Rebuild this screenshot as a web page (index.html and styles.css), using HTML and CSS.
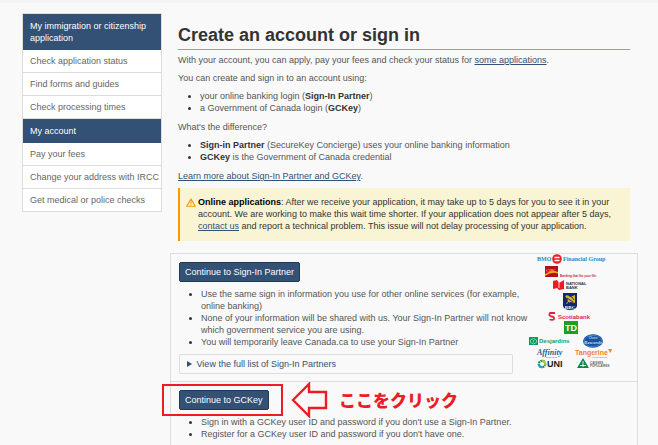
FILE: index.html
```html
<!DOCTYPE html>
<html lang="en">
<head>
  <meta charset="UTF-8" />
  <meta name="viewport" content="width=device-width, initial-scale=1" />
  <title>Create an account or sign in - Canada.ca</title>
  <link rel="stylesheet" href="styles.css">
</head>
<body>

<div class="page">

  <nav class="side-menu" aria-label="Section menu">
    <h2 class="menu-title">My immigration or citizenship application</h2>
    <a href="#">Check application status</a>
    <a href="#">Find forms and guides</a>
    <a href="#">Check processing times</a>
    <h2 class="menu-title">My account</h2>
    <a href="#">Pay your fees</a>
    <a href="#">Change your address with IRCC</a>
    <a href="#">Get medical or police checks</a>
  </nav>

  <main>
    <h1>Create an account or sign in</h1>
    <p>With your account, you can apply, pay your fees and check your status for <a href="#">some applications</a>.</p>
    <p>You can create and sign in to an account using:</p>
    <ul>
      <li>your online banking login (<strong>Sign-In Partner</strong>)</li>
      <li>a Government of Canada login (<strong>GCKey</strong>)</li>
    </ul>
    <p>What's the difference?</p>
    <ul>
      <li><strong>Sign-in Partner</strong> (SecureKey Concierge) uses your online banking information</li>
      <li><strong>GCKey</strong> is the Government of Canada credential</li>
    </ul>
    <p><a href="#">Learn more about Sign-In Partner and GCKey</a>.</p>

    <section class="alert">
      <svg class="alert-icon" viewBox="0 0 20 18" aria-hidden="true">
        <path d="M10 2 L18.5 16.5 H1.5 Z" fill="none" stroke="#ff9900" stroke-width="2.4" stroke-linejoin="round"/>
        <path d="M10 6.5 V11.5 M10 12.8 V15" stroke="#ff9900" stroke-width="2.2"/>
      </svg>
      <p><strong>Online applications</strong>: After we receive your application, it may take up to 5 days for you to see it in your account. We are working to make this wait time shorter. If your application does not appear after 5 days, <a href="#">contact us</a> and report a technical problem. This issue will not delay processing of your application.</p>
    </section>

    <div class="options">
      <section class="option partner">
        <div class="partner-info">
          <button type="button" class="btn">Continue to Sign-In Partner</button>
          <ul>
            <li>Use the same sign in information you use for other online services (for example, online banking)</li>
            <li>None of your information will be shared with us. Your Sign-In Partner will not know which government service you are using.</li>
            <li>You will temporarily leave Canada.ca to use your Sign-In Partner</li>
          </ul>
          <details>
            <summary>View the full list of Sign-In Partners</summary>
          </details>
        </div>

        <svg class="logos" viewBox="0 0 90 120" role="img" aria-label="Sign-In Partners">
          <!-- BMO -->
          <g font-family="Liberation Serif, serif" font-weight="700" font-size="6" fill="#1b87c9">
            <text x="9" y="7">BMO</text>
            <circle cx="29" cy="5" r="4.8" fill="#ed1c24"/>
            <path d="M26.5 3.5 H31.5 M26.5 6.5 H31.5" stroke="#fff" stroke-width="1.4"/>
            <text x="35" y="7">Financial Group</text>
          </g>
          <!-- CIBC -->
          <rect x="17" y="12" width="13" height="11" fill="#b30f24"/>
          <path d="M17 20 Q24 15 30 18 V19.5 Q24 17 17 22 Z" fill="#f5a81c"/>
          <text x="18" y="17.5" font-family="Liberation Serif, serif" font-weight="700" font-size="4" fill="#f9b233">CIBC</text>
          <text x="32" y="22.5" font-family="Liberation Sans, sans-serif" font-weight="700" font-size="3" fill="#c4213c">Banking that fits your life.</text>
          <!-- National Bank -->
          <path d="M25 27 L29 26 L31 29 L36 26 V35 L31 36 L29 34 L25 35 Z" fill="#ed1c24"/>
          <path d="M31 29 V34" stroke="#f8f8f8" stroke-width="0.8"/>
          <g font-family="Liberation Sans, sans-serif" font-weight="700" font-size="4" fill="#243746">
            <text x="38" y="30.5">NATIONAL</text>
            <text x="38" y="35">BANK</text>
          </g>
          <!-- RBC -->
          <path d="M35 39 H49 V52 Q48 56 42 56 Q36 56 35 52 Z" fill="#14246e"/>
          <path d="M37 42 Q40 40 42 43 L47 41 V49 L43 48 L38 50 L40 46 Z" fill="#d6b526"/>
          <path d="M39 44 L45 48 M43 42 L46 46 M38 47 L43 50" stroke="#14246e" stroke-width="0.9"/>
          <text x="42" y="55" text-anchor="middle" font-family="Liberation Serif, serif" font-weight="700" font-size="5" fill="#fff">RBC</text>
          <!-- Scotiabank -->
          <path d="M27 59 H22 Q20 62 24 62.5 Q26.5 63 26 65 Q25 66.5 21.5 65.5" fill="none" stroke="#ed1c3c" stroke-width="1.8"/>
          <text x="30" y="65" font-family="Liberation Sans, sans-serif" font-weight="700" font-size="6" fill="#ed1c3c">Scotiabank</text>
          <!-- TD -->
          <rect x="36" y="67" width="14" height="13" fill="#1ea01e"/>
          <text x="43" y="77" text-anchor="middle" font-family="Liberation Sans, sans-serif" font-weight="700" font-size="9" fill="#fff">TD</text>
          <!-- Desjardins -->
          <rect x="1" y="83" width="9" height="8" fill="#0d9b5c"/>
          <path d="M5.5 84.5 L8.5 86 V88.5 L5.5 90 L2.5 88.5 V86 Z M5.5 86 V88.5" fill="none" stroke="#9ad8bb" stroke-width="0.8"/>
          <text x="11" y="89" font-family="Liberation Sans, sans-serif" font-weight="700" font-size="6" fill="#179b62">Desjardins</text>
          <!-- Choice Rewards -->
          <ellipse cx="65" cy="87" rx="10" ry="6.8" fill="#15529f"/>
          <ellipse cx="65" cy="87" rx="8.8" ry="5.7" fill="none" stroke="#7fa9d8" stroke-width="0.5"/>
          <g font-family="Liberation Serif, serif" font-style="italic" text-anchor="middle" fill="#fff">
            <text x="65" y="85" font-size="3">Choice</text>
            <text x="65" y="89.5" font-size="5">Rewards</text>
          </g>
          <!-- Affinity -->
          <text x="9" y="101" font-family="Liberation Serif, serif" font-style="italic" font-weight="700" font-size="8" fill="#24639b">Affinity</text>
          <text x="18" y="104" font-family="Liberation Sans, sans-serif" font-size="2" fill="#24639b">Credit Union</text>
          <!-- Tangerine -->
          <text x="47" y="101" font-family="Liberation Sans, sans-serif" font-weight="700" font-size="7" fill="#f4812b">Tangerine</text>
          <path d="M80 95 H84 L82.5 99 Z" fill="#f4812b"/>
          <text x="64" y="104" font-family="Liberation Sans, sans-serif" font-size="2" fill="#777">Forward Banking</text>
          <!-- UNI -->
          <circle cx="14" cy="110" r="3.2" fill="none" stroke="#1b9a57" stroke-width="2.2" stroke-dasharray="2 0.6"/>
          <path d="M14 106.8 A3.2 3.2 0 0 1 17 111" fill="none" stroke="#a5cc33" stroke-width="2.2"/>
          <path d="M11 111 A3.2 3.2 0 0 0 14 113.2" fill="none" stroke="#27a3d0" stroke-width="2.2"/>
          <text x="19" y="113" font-family="Liberation Sans, sans-serif" font-weight="700" font-size="9" fill="#222">UNI</text>
          <!-- Caisses populaires -->
          <path d="M55 104 L61 114 H49 Z" fill="#12854a"/>
          <path d="M55 107 V113 M52 111.5 H58" fill="none" stroke="#f8f8f8" stroke-width="0.9"/>
          <g font-family="Liberation Sans, sans-serif" font-weight="700" font-size="3" fill="#666">
            <text x="62" y="110">CAISSES</text>
            <text x="62" y="113">POPULAIRES</text>
          </g>
        </svg>
      </section>

      <section class="option gckey">
        <button type="button" class="btn">Continue to GCKey</button>
        <ul>
          <li>Sign in with a GCKey user ID and password if you don't use a Sign-In Partner.</li>
          <li>Register for a GCKey user ID and password if you don't have one.</li>
        </ul>
        <div class="callout">
          <span class="callout-box"></span>
          <svg class="callout-arrow" viewBox="0 0 37 36" aria-hidden="true">
            <path d="M2 18 L18 2 V10 H35 V26 H18 V34 Z" fill="#f9f9f9" stroke="#ed1c24" stroke-width="2.4"/>
          </svg>
          <span class="callout-text" lang="ja">ここをクリック</span>
        </div>
      </section>
    </div>
  </main>

</div>

</body>
</html>
```
FILE: styles.css
```css
/* Base */
* {
  box-sizing: border-box;
}

body {
  margin: 0;
  border-top: 3px solid #f4f4f4;
  background: #f9f9f9;
  color: #555;
  font-family: "Liberation Sans", Arial, sans-serif;
  font-size: 9px;
  line-height: 12px;
}

.page {
  display: flex;
  align-items: flex-start;
  gap: 16px;
  padding: 10px 28px 0 22px;
}

p {
  margin: 0 0 6px;
}

ul {
  margin: 0 0 7px;
  padding-left: 22px;
}

li::marker {
  color: #333;
}

strong {
  color: #333;
}

a {
  color: #335075;
}

/* Side menu */
.side-menu {
  flex: 0 0 140px;
  min-width: 0;
  border: 1px solid #ddd;
}

.side-menu a {
  display: block;
  padding: 5px 7px;
  border-bottom: 1px solid #ddd;
  background: #fff;
  color: #666;
  text-decoration: none;
  white-space: nowrap;
}

.side-menu a:last-child {
  border-bottom: none;
}

.menu-title {
  margin: 0;
  padding: 6px 7px;
  background: #335075;
  color: #fff;
  font-size: 9px;
  font-weight: 400;
}

/* Main content */
main {
  flex: 1;
  min-width: 0;
}

h1 {
  margin: 10px 0 4px;
  padding-bottom: 2px;
  border-bottom: 1px solid #cf8a93;
  color: #333;
  font-size: 18px;
  line-height: 24px;
}

.alert {
  display: flex;
  gap: 2px;
  margin-bottom: 12px;
  padding: 8px 2px 9px 6px;
  border-left: 2px solid #ff9900;
  background: #f9f4d4;
  color: #333;
}

.alert p {
  flex: 1;
  margin: 0;
}

.alert strong {
  color: #000;
}

.alert-icon {
  width: 10px;
  height: 9px;
  margin-top: 2px;
}

/* Sign in options */
.options {
  margin: 0 -8px;
  border: 1px solid #ddd;
}

.option {
  padding: 8px 8px 5px;
}

.option ul {
  margin: 6px 0;
}

.partner {
  display: flex;
  justify-content: space-between;
  padding: 0 19px 0 8px;
}

.partner-info {
  flex: 0 1 334px;
  padding: 8px 0 7px;
}

/* the list runs past the details box, up to the logos */
.partner-info ul {
  margin-right: -18px;
}

.btn {
  display: block;
  height: 20px;
  padding: 0 5px;
  border: 1px solid #243850;
  border-radius: 2px;
  background: #335075;
  color: #fff;
  font: inherit;
  cursor: pointer;
}

details {
  padding: 3px 7px;
  border: 1px solid #ddd;
  border-radius: 2px;
}

summary {
  color: #335075;
  cursor: pointer;
}

.logos {
  width: 90px;
  height: 120px;
}

.gckey {
  position: relative;
  border-top: 1px solid #ddd;
}

/* Highlight drawn over the GCKey button */
.callout {
  position: absolute;
  top: 0;
  left: -9px;
  display: flex;
  align-items: center;
  pointer-events: none;
}

.callout-box {
  width: 121px;
  height: 32px;
  border: 2px solid #ed1c24;
}

.callout-arrow {
  width: 37px;
  height: 36px;
  margin: 0 11px 0 8px;
}

.callout-text {
  color: #ed1c24;
  font-family: "Noto Sans CJK JP", sans-serif;
  font-size: 17px;
  font-weight: 900;
  line-height: 24px;
  white-space: nowrap;
}
```
